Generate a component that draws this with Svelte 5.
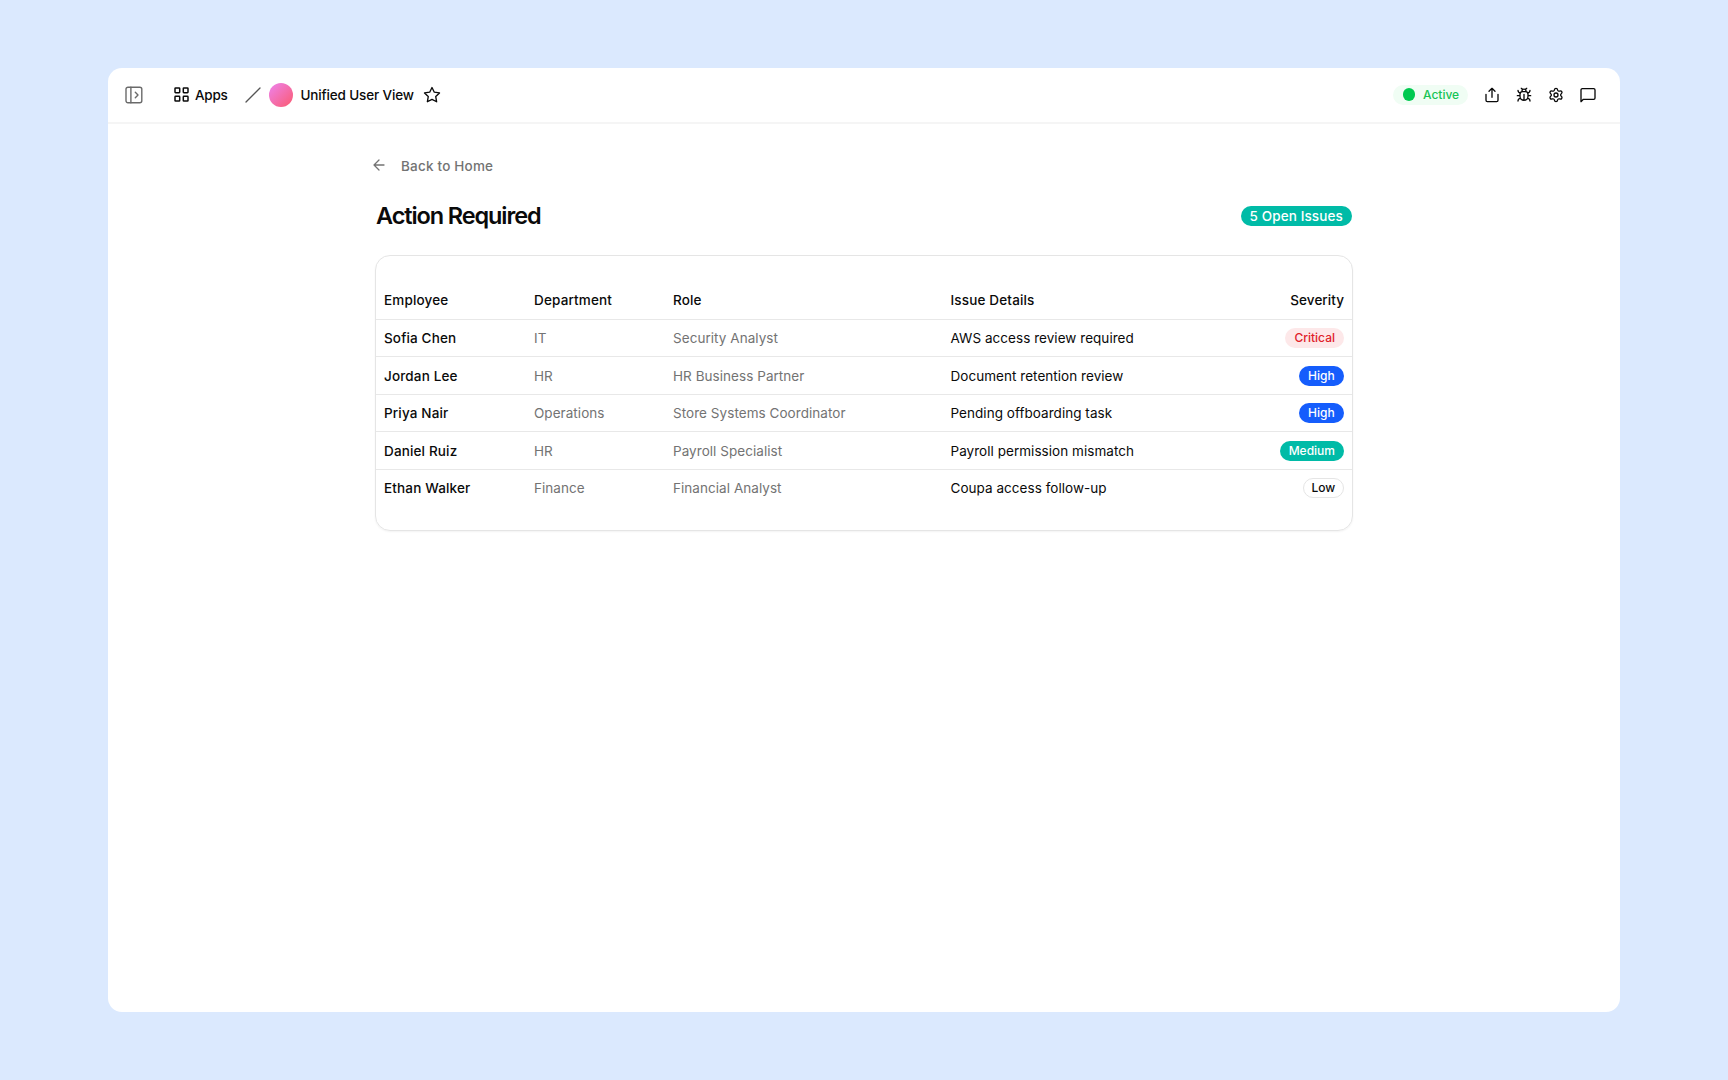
<script>
  const issues = [
    { name: 'Sofia Chen', dept: 'IT', role: 'Security Analyst', issue: 'AWS access review required', severity: 'Critical' },
    { name: 'Jordan Lee', dept: 'HR', role: 'HR Business Partner', issue: 'Document retention review', severity: 'High' },
    { name: 'Priya Nair', dept: 'Operations', role: 'Store Systems Coordinator', issue: 'Pending offboarding task', severity: 'High' },
    { name: 'Daniel Ruiz', dept: 'HR', role: 'Payroll Specialist', issue: 'Payroll permission mismatch', severity: 'Medium' },
    { name: 'Ethan Walker', dept: 'Finance', role: 'Financial Analyst', issue: 'Coupa access follow-up', severity: 'Low' }
  ];
</script>

<div class="page">
  <div class="window">
    <header>
      <svg class="icon panel" viewBox="0 0 18 18"><rect x="1" y="1.2" width="15.8" height="15.6" rx="2" /><path d="M5.9 1.2v15.6M10.3 6.3 13 9l-2.7 2.7" /></svg>
      <div class="apps">
        <svg class="icon grid" viewBox="0 0 15 15"><rect x="1" y="1" width="4.7" height="4.7" rx=".6" /><rect x="9.3" y="1" width="4.7" height="4.7" rx=".6" /><rect x="1" y="9.3" width="4.7" height="4.7" rx=".6" /><rect x="9.3" y="9.3" width="4.7" height="4.7" rx=".6" /></svg>
        <span>Apps</span>
      </div>
      <svg class="icon slash" viewBox="0 0 16 16"><path d="M1 15 15 1" /></svg>
      <span class="avatar"></span>
      <span class="title">Unified User View</span>
      <svg class="icon star" viewBox="0 0 24 24"><path d="m12 2 3.090 6.260L22 9.270l-5 4.870 1.180 6.880L12 17.770l-6.180 3.250L7 14.140 2 9.270l6.910-1.010z" /></svg>
      <div class="actions">
        <span class="status"><i></i><span>Active</span></span>
        <svg class="icon" viewBox="0 0 24 24"><path d="M12 15.500V2M7.500 6.500 12 2l4.500 4.500M3 11v9a2 2 0 0 0 2 2h14a2 2 0 0 0 2-2v-9" /></svg>
        <svg class="icon" viewBox="0 0 24 24"><path d="m8 2 1.880 1.880M14.120 3.880 16 2M9 7.130v-1a3 3 0 1 1 6 0v1M12 20a6 6 0 0 1-6-6v-3a4 4 0 0 1 4-4h4a4 4 0 0 1 4 4v3a6 6 0 0 1-6 6M12 20v-9M6.530 9C4.600 8.800 3 7.100 3 5M6 13H2M3 21c0-2.100 1.700-3.900 3.800-4M20.970 5c0 2.100-1.600 3.800-3.500 4M22 13h-4M17.200 17c2.100.1 3.800 1.900 3.800 4" /></svg>
        <svg class="icon" viewBox="0 0 24 24"><path d="M9.671 4.136a2.340 2.340 0 0 1 4.659 0 2.340 2.340 0 0 0 3.319 1.915 2.340 2.340 0 0 1 2.330 4.033 2.340 2.340 0 0 0 0 3.831 2.340 2.340 0 0 1-2.330 4.033 2.340 2.340 0 0 0-3.319 1.915 2.340 2.340 0 0 1-4.659 0 2.340 2.340 0 0 0-3.320-1.915 2.340 2.340 0 0 1-2.330-4.033 2.340 2.340 0 0 0 0-3.831A2.340 2.340 0 0 1 6.350 6.051a2.340 2.340 0 0 0 3.319-1.915" /><circle cx="12" cy="12" r="3" /></svg>
        <svg class="icon" viewBox="0 0 24 24"><path d="M1.500 22V4.500a2 2 0 0 1 2-2h17a2 2 0 0 1 2 2v12a2 2 0 0 1-2 2H5z" /></svg>
      </div>
    </header>
    <main>
      <div class="back">
        <svg class="icon" viewBox="0 0 12 12"><path d="M6 1 1 6l5 5M1 6h10" /></svg>
        <span>Back to Home</span>
      </div>
      <div class="heading">
        <h1>Action Required</h1>
        <span class="count">5 Open Issues</span>
      </div>
      <section class="card">
        <div class="row head">
          <span>Employee</span><span>Department</span><span>Role</span><span>Issue Details</span><span class="end">Severity</span>
        </div>
        {#each issues as item}
          <div class="row">
            <span class="name">{item.name}</span>
            <span class="muted">{item.dept}</span>
            <span class="muted">{item.role}</span>
            <span class="issue">{item.issue}</span>
            <span class="end"><b class="badge {item.severity.toLowerCase()}">{item.severity}</b></span>
          </div>
        {/each}
      </section>
    </main>
  </div>
</div>

<style>
  :global(body) { margin: 0; background: #dbe9fe; }
  .page {
    box-sizing: border-box;
    width: 1728px;
    height: 1080px;
    padding: 68px 108px;
    background: #dbe9fe;
    color: #0a0a0a;
    font-family: Inter, "Liberation Sans", sans-serif;
    font-size: 13.500px;
    white-space: nowrap;
  }
  .window { height: 944px; border-radius: 14px; background: #fff; overflow: hidden; }
  header {
    box-sizing: border-box;
    height: 56px;
    padding: 0 24.500px 1px 17px;
    display: flex;
    align-items: center;
    border-bottom: 2px solid #f5f5f5;
    font-weight: 500;
  }
  .icon { display: block; flex: none; fill: none; stroke: currentColor; stroke-width: 2; stroke-linecap: round; stroke-linejoin: round; }
  .panel { width: 18px; height: 18px; color: #6a6a6a; stroke-width: 1.400; }
  .apps { display: flex; align-items: center; gap: 6px; margin-left: 31px; }
  .grid { width: 15px; height: 15px; stroke-width: 1.500; }
  .apps span { width: 49.500px; letter-spacing: -0.250px; }
  .slash { width: 16px; height: 16px; stroke-width: 1.300; color: #555; }
  .avatar { width: 24px; height: 24px; margin-left: 8px; border-radius: 50%; background: linear-gradient(135deg, #ed83ee, #fb5a70); }
  .title { width: 114px; margin-left: 8px; letter-spacing: -0.150px; }
  .star { width: 18px; height: 18px; margin-left: 8.500px; stroke-width: 1.800; }
  .actions { display: flex; align-items: center; gap: 16px; margin-left: auto; }
  .actions .icon { width: 16px; height: 16px; }
  .status {
    box-sizing: border-box; width: 75px; height: 20px; padding-left: 10px;
    display: flex; align-items: center; gap: 8px;
    border-radius: 10px; background: #f0fdf4; color: #16c455; font-size: 12px;
  }
  .status span { padding-bottom: 1px; }
  .status i { width: 12.500px; height: 12.500px; border-radius: 50%; background: #00c950; }
  main { width: 978px; margin: 0 auto; }
  .back { display: flex; align-items: center; height: 20px; padding-top: 31px; gap: 16px; color: #737373; font-weight: 500; letter-spacing: 0.200px; }
  .back span { padding-top: 1px; }
  .back .icon { width: 12px; height: 12px; margin-left: -2px; stroke-width: 1.300; }
  .heading { display: flex; align-items: center; justify-content: space-between; height: 32px; margin-top: 25px; padding: 0 1px; }
  h1 { margin: 0; padding-bottom: 1px; font-size: 23.500px; font-weight: 600; letter-spacing: -1.100px; }
  .count {
    box-sizing: border-box; width: 111.500px; height: 20px; line-height: 20px; text-align: center;
    border-radius: 10px; background: #00bba7; color: #fff; font-weight: 500; letter-spacing: 0.120px;
  }
  .card {
    box-sizing: border-box; height: 276px; margin-top: 23px; padding-top: 23px;
    border: 1px solid #e5e5e5; border-radius: 15px; box-shadow: 0 1px 2px #0000000d;
  }
  .row {
    box-sizing: border-box; height: 37.450px; padding: 0 8px;
    display: grid; grid-template-columns: 150px 139px 277.500px 1fr auto;
    align-items: center; border-bottom: 1px solid #e8e8e8;
  }
  .head { height: 41px; padding-top: 1px; font-weight: 500; letter-spacing: 0.160px; }
  .head .end { letter-spacing: 0.050px; }
  .row:last-child { border-bottom: 0; padding-bottom: 1px; }
  .name { font-weight: 500; letter-spacing: 0.150px; }
  .muted { color: #737373; letter-spacing: 0.050px; }
  .issue { letter-spacing: 0.040px; }
  .badge {
    display: block; height: 20px; padding: 0 9px; line-height: 20px;
    border-radius: 10px; font-size: 12px; font-weight: 500; color: #fff;
  }
  .critical { background: #fde8e9; color: #e02029; }
  .high { padding: 0 9.300px; background: #155dfc; }
  .medium { background: #00bba7; }
  .low { height: 18px; padding: 0 7.700px; border: 1px solid #e5e5e5; line-height: 18px; color: #0a0a0a; }
</style>
